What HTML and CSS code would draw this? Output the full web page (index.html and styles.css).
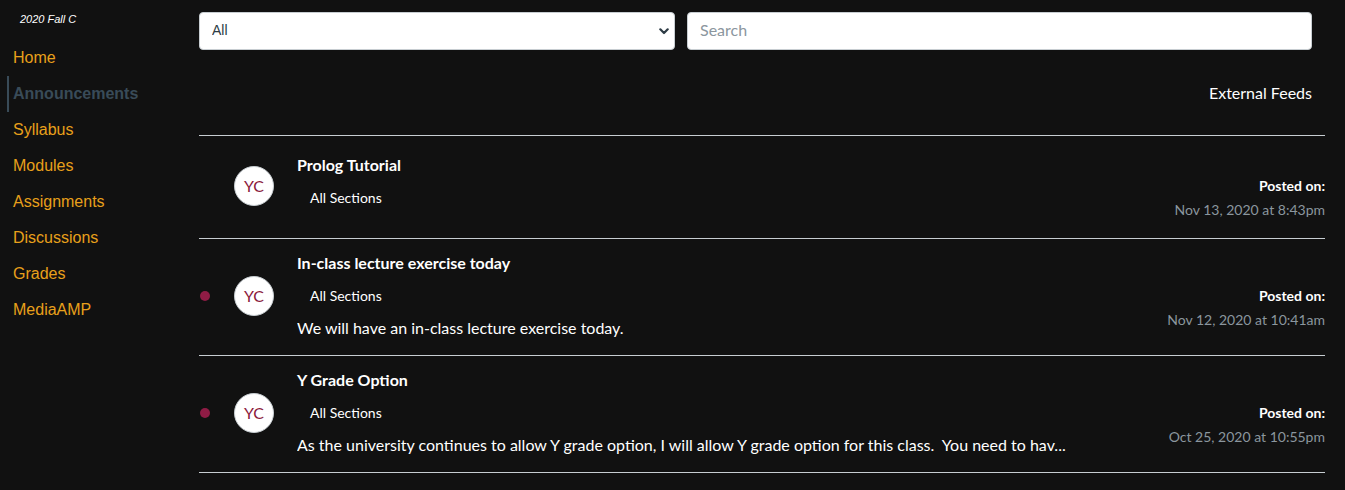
FILE: index.html
```html
<!DOCTYPE html>
<html lang="en">
<head>
<meta charset="utf-8">
<title>Announcements</title>
<link rel="stylesheet" href="styles.css">
</head>
<body>
<div class="layout">
  <aside class="sidebar">
    <div class="term">2020 Fall C</div>
    <nav class="nav">
      <a class="nav-link" href="#">Home</a>
      <a class="nav-link active" href="#">Announcements</a>
      <a class="nav-link" href="#">Syllabus</a>
      <a class="nav-link" href="#">Modules</a>
      <a class="nav-link" href="#">Assignments</a>
      <a class="nav-link" href="#">Discussions</a>
      <a class="nav-link" href="#">Grades</a>
      <a class="nav-link" href="#">MediaAMP</a>
    </nav>
  </aside>
  <main class="main">
    <div class="toolbar">
      <div class="select-wrap">
        <select class="filter">
          <option>All</option>
        </select>
        <svg class="chevron" width="10" height="7" viewBox="0 0 10 7"><path d="M1.3 1.3 L5 5 L8.7 1.3" fill="none" stroke="#2d3b45" stroke-width="2.2" stroke-linecap="round" stroke-linejoin="round"/></svg>
      </div>
      <input class="search" type="text" placeholder="Search">
    </div>
    <div class="feeds-row">
      <a class="feeds" href="#">External Feeds</a>
    </div>
    <ul class="list">
      <li class="item">
        <div class="dot-col"></div>
        <div class="avatar">YC</div>
        <div class="content">
          <div class="title">Prolog Tutorial</div>
          <div class="sections">All Sections</div>
          <div class="body"></div>
        </div>
        <div class="posted">
          <div class="posted-label">Posted on:</div>
          <div class="posted-date">Nov 13, 2020 at 8:43pm</div>
        </div>
      </li>
      <li class="item">
        <div class="dot-col"><span class="dot"></span></div>
        <div class="avatar">YC</div>
        <div class="content">
          <div class="title">In-class lecture exercise today</div>
          <div class="sections">All Sections</div>
          <div class="body">We will have an in-class lecture exercise today.</div>
        </div>
        <div class="posted">
          <div class="posted-label">Posted on:</div>
          <div class="posted-date">Nov 12, 2020 at 10:41am</div>
        </div>
      </li>
      <li class="item">
        <div class="dot-col"><span class="dot"></span></div>
        <div class="avatar">YC</div>
        <div class="content">
          <div class="title">Y Grade Option</div>
          <div class="sections">All Sections</div>
          <div class="body">As the university continues to allow Y grade option, I will allow Y grade option for this class.&nbsp; You need to hav...</div>
        </div>
        <div class="posted">
          <div class="posted-label">Posted on:</div>
          <div class="posted-date">Oct 25, 2020 at 10:55pm</div>
        </div>
      </li>
    </ul>
  </main>
</div>
</body>
</html>
```
FILE: styles.css
```css
* { box-sizing: border-box; }

html, body {
  margin: 0;
  padding: 0;
  background: #111111;
  height: 100%;
  overflow: hidden;
}

body {
  font-family: Lato, "Liberation Sans", sans-serif;
  color: #ffffff;
}

.layout {
  display: flex;
}

.sidebar {
  width: 199px;
  flex: none;
  font-family: "Liberation Sans", Arial, sans-serif;
}

.term {
  height: 40px;
  padding: 13px 0 0 20px;
  font-size: 11px;
  line-height: 13px;
  font-style: italic;
  color: #ffffff;
}

.nav {
  display: flex;
  flex-direction: column;
  padding-left: 7px;
}

.nav-link {
  display: block;
  height: 36px;
  line-height: 36px;
  padding-left: 4px;
  border-left: 2px solid transparent;
  font-size: 16px;
  color: #e8a01b;
  text-decoration: none;
}

.nav-link.active {
  color: #394b58;
  font-weight: bold;
  border-left-color: #394b58;
}

.main {
  flex: 1;
  padding: 12px 20px 0 0;
}

.toolbar {
  display: grid;
  grid-template-columns: 476px 1fr;
  gap: 12px;
  margin-right: 13px;
}

.select-wrap {
  position: relative;
}

.filter {
  appearance: none;
  -webkit-appearance: none;
  width: 100%;
  height: 38px;
  border: 1px solid #c7cdd1;
  border-radius: 4px;
  background: #ffffff;
  padding: 0 30px 2px 12px;
  font-family: "Liberation Sans", Arial, sans-serif;
  font-size: 14px;
  color: #2d3b45;
  outline: none;
}

.chevron {
  position: absolute;
  right: 6px;
  top: 16px;
  pointer-events: none;
}

.search {
  height: 38px;
  border: 1px solid #c7cdd1;
  border-radius: 4px;
  background: #ffffff;
  padding: 0 12px 3px;
  font-family: Lato, sans-serif;
  font-size: 16px;
  color: #2d3b45;
  outline: none;
}

.search::placeholder {
  color: #8b969e;
}

.feeds-row {
  display: flex;
  justify-content: flex-end;
  margin-right: 13px;
  height: 85px;
  padding-top: 31px;
}

.feeds {
  font-size: 16px;
  line-height: 24px;
  color: #ffffff;
  text-decoration: none;
}

.list {
  list-style: none;
  margin: 0;
  padding: 0;
  border-top: 1px solid #c7cdd1;
}

.item {
  display: flex;
  align-items: center;
  padding: 12px 0 15px;
  border-bottom: 1px solid #c7cdd1;
}

.dot-col {
  width: 35px;
  flex: none;
  display: flex;
  align-items: center;
  padding-left: 1px;
}

.dot {
  width: 10px;
  height: 10px;
  border-radius: 50%;
  background: #8f1c45;
}

.avatar {
  width: 40px;
  height: 40px;
  flex: none;
  border-radius: 50%;
  background: #ffffff;
  border: 1px solid #c7cdd1;
  display: flex;
  align-items: center;
  justify-content: center;
  font-size: 16px;
  color: #8b1a3c;
  margin-right: 23px;
}

.content {
  flex: 1;
  min-width: 0;
}

.title {
  font-weight: bold;
  font-size: 16px;
  line-height: 24px;
}

.sections {
  margin-top: 9px;
  padding-left: 13px;
  font-size: 14px;
  line-height: 24px;
}

.body {
  margin-top: 8px;
  font-size: 16px;
  line-height: 24px;
  white-space: nowrap;
  overflow: hidden;
}

.posted {
  flex: none;
  text-align: right;
  padding-top: 28px;
}

.posted-label {
  font-weight: bold;
  font-size: 14px;
  line-height: 20px;
}

.posted-date {
  font-size: 14px;
  line-height: 27px;
  color: #8b969e;
}
```
